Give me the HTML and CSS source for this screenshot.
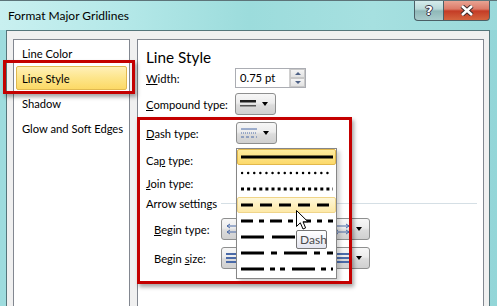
FILE: index.html
```html
<!DOCTYPE html>
<html lang="en">

<head>
  <meta charset="UTF-8">
  <title>Format Major Gridlines</title>
  <link rel="stylesheet" href="styles.css">
</head>

<body>
  <div class="window">
    <div class="titlebar">
      <span class="title">Format Major Gridlines</span>
      <div class="caption-buttons">
        <span class="cap-btn help">?</span>
        <span class="cap-btn close">
          <svg width="14" height="11" viewBox="0 0 14 11"><path d="M2 1 L12 10 M12 1 L2 10" stroke="#3a2a2a" stroke-width="4.5" /><path d="M2 1 L12 10 M12 1 L2 10" stroke="#fff" stroke-width="2.6" /></svg>
        </span>
      </div>
    </div>

    <div class="client">
      <ul class="nav">
        <li>Line Color</li>
        <li class="active">Line Style</li>
        <li>Shadow</li>
        <li>Glow and Soft Edges</li>
      </ul>

      <div class="panel">
        <h2 class="heading">Line Style</h2>

        <div class="row row-width">
          <span class="label"><u>W</u>idth:</span>
          <div class="spin">
            <span class="spin-value">0.75 pt</span>
            <span class="spin-arrows">
              <span class="spin-up"></span>
              <span class="spin-down"></span>
            </span>
          </div>
        </div>

        <div class="row row-compound">
          <span class="label"><u>C</u>ompound type:</span>
          <span class="drop-btn">
            <svg width="16" height="10" viewBox="0 0 16 10"><rect x="0" y="1" width="16" height="2.5" fill="#1e1e1e" /><rect x="0" y="6" width="16" height="1.5" fill="#555" /></svg>
            <span class="tri"></span>
          </span>
        </div>

        <div class="row row-dash">
          <span class="label"><u>D</u>ash type:</span>
          <span class="drop-btn">
            <svg width="16" height="12" viewBox="0 0 16 12"><line x1="0" y1="2" x2="16" y2="2" stroke="#4a6aa8" stroke-width="1" /><line x1="0" y1="6" x2="16" y2="6" stroke="#4a6aa8" stroke-width="1" stroke-dasharray="1 1" /><line x1="0" y1="10" x2="16" y2="10" stroke="#4a6aa8" stroke-width="1" stroke-dasharray="3 2" /></svg>
            <span class="tri"></span>
          </span>
        </div>

        <div class="row row-cap">
          <span class="label">Ca<u>p</u> type:</span>
        </div>

        <div class="row row-join">
          <span class="label"><u>J</u>oin type:</span>
        </div>

        <div class="row row-arrow">
          <span class="section">Arrow settings</span>
          <span class="rule"></span>
        </div>

        <div class="row row-begin">
          <span class="label sub"><u>B</u>egin type:</span>
          <span class="drop-btn">
            <svg width="16" height="12" viewBox="0 0 16 12"><path d="M1 3 H15 M1 3 L4 1 M1 3 L4 5" stroke="#4a6aa8" fill="none" stroke-width="1" /><path d="M1 9 H15 M1 9 L4 7 M1 9 L4 11 M15 9 L12 7 M15 9 L12 11" stroke="#4a6aa8" fill="none" stroke-width="1" /></svg>
            <span class="tri"></span>
          </span>
          <span class="drop-btn end">
            <svg width="16" height="12" viewBox="0 0 16 12"><path d="M1 3 H15 M15 3 L12 1 M15 3 L12 5" stroke="#4a6aa8" fill="none" stroke-width="1" /><path d="M1 9 H15 M1 9 L4 7 M1 9 L4 11 M15 9 L12 7 M15 9 L12 11" stroke="#4a6aa8" fill="none" stroke-width="1" /></svg>
            <span class="tri"></span>
          </span>
        </div>

        <div class="row row-size">
          <span class="label sub">Begin <u>s</u>ize:</span>
          <span class="drop-btn">
            <svg width="16" height="12" viewBox="0 0 16 12"><rect x="0" y="1" width="16" height="2" fill="#4a6aa8" /><rect x="0" y="5" width="16" height="2" fill="#4a6aa8" /><rect x="0" y="9" width="16" height="2" fill="#4a6aa8" /></svg>
            <span class="tri"></span>
          </span>
          <span class="drop-btn end">
            <svg width="16" height="12" viewBox="0 0 16 12"><rect x="0" y="1" width="16" height="2" fill="#4a6aa8" /><rect x="0" y="5" width="16" height="2" fill="#4a6aa8" /><rect x="0" y="9" width="16" height="2" fill="#4a6aa8" /></svg>
            <span class="tri"></span>
          </span>
        </div>
      </div>
    </div>

    <!-- dash type list, opened -->
    <ul class="dash-list">
      <li class="selected"><svg width="92" height="16"><line x1="0" y1="8" x2="92" y2="8" stroke="#000" stroke-width="3" /></svg></li>
      <li><svg width="92" height="16"><line x1="1" y1="8" x2="92" y2="8" stroke="#000" stroke-width="2.4" stroke-linecap="round" stroke-dasharray="0.1 6" /></svg></li>
      <li><svg width="92" height="16"><line x1="0" y1="8" x2="92" y2="8" stroke="#000" stroke-width="3" stroke-dasharray="3 3.1" /></svg></li>
      <li class="hover"><svg width="92" height="16"><line x1="0" y1="8" x2="92" y2="8" stroke="#000" stroke-width="3" stroke-dasharray="12 7" /></svg></li>
      <li><svg width="92" height="16"><line x1="0" y1="8" x2="92" y2="8" stroke="#000" stroke-width="3" stroke-dasharray="12 6 5 6" /></svg></li>
      <li><svg width="92" height="16"><line x1="0" y1="8" x2="92" y2="8" stroke="#000" stroke-width="3" stroke-dasharray="23 8" /></svg></li>
      <li><svg width="92" height="16"><line x1="0" y1="8" x2="92" y2="8" stroke="#000" stroke-width="3" stroke-dasharray="23 7 6 7" /></svg></li>
      <li><svg width="92" height="16"><line x1="0" y1="8" x2="92" y2="8" stroke="#000" stroke-width="3" stroke-dasharray="23 6 5 5 5 7" /></svg></li>
    </ul>

    <span class="tooltip">Dash</span>

    <svg class="cursor" width="13" height="21" viewBox="0 0 13 21">
      <path d="M0.5 0.5 L0.5 16.5 L4.3 12.8 L7 19 L9.6 17.9 L7 11.8 L12 11.8 Z" fill="#fff" stroke="#000" stroke-width="1" stroke-linejoin="miter" />
    </svg>

    <!-- annotation boxes -->
    <span class="mark mark-nav"></span>
    <span class="mark mark-dash"></span>
  </div>
</body>

</html>
```

FILE: styles.css
```css
* {
  box-sizing: border-box;
}

body {
  margin: 0;
  font-family: Lato, "Open Sans", sans-serif;
  font-size: 11.2px;
  color: #000;
}

.window {
  position: relative;
  width: 497px;
  height: 306px;
  overflow: hidden;
  border-top: 1px solid #5d7479;
  background: linear-gradient(90deg, #9edcde 0%, #b2e6e6 40%, #a4dede 70%, #93d6d8 100%);
}

.titlebar {
  display: flex;
  align-items: flex-start;
  height: 29px;
  background: linear-gradient(90deg, #c9f0f0 0%, #b4e8e8 25%, #9cdcdc 50%, #a6e0e0 75%, #9ad9da 100%);
}

.title {
  margin: 5px 0 0 8px;
  font-size: 12px;
  line-height: 20px;
  color: #000;
}

.caption-buttons {
  display: flex;
  margin: -1px 7px 0 auto;
}

.cap-btn {
  display: flex;
  align-items: center;
  justify-content: center;
  height: 21px;
  border: 1px solid #4b5f66;
  border-top: none;
}

.help {
  width: 29px;
  border-right: none;
  border-radius: 0 0 0 4px;
  background: linear-gradient(#d8eeee 0%, #b9d8d8 45%, #8fb8b8 55%, #a9cccc 100%);
  color: #fff;
  font-family: "DejaVu Sans", sans-serif;
  font-weight: bold;
  font-size: 13px;
  text-shadow: -1px 0 #334, 1px 0 #334, 0 -1px #334, 0 1px #334;
}

.close {
  width: 47px;
  border-radius: 0 0 4px 0;
  background: linear-gradient(#eaa898 0%, #dc7a68 45%, #c43c26 55%, #d4643e 100%);
}

.client {
  display: flex;
  align-items: flex-start;
  gap: 7px;
  width: 484px;
  height: 276px;
  margin-left: 6px;
  padding: 8px 5px 0 6px;
  border: 1px solid #55767b;
  border-bottom: none;
  background: #f0f0f0;
}

.nav {
  flex: none;
  width: 117px;
  min-width: 0;
  height: 300px;
  margin: 0;
  padding: 1px 1px;
  list-style: none;
  border: 1px solid #828790;
  background: #fff;
}

.nav li {
  height: 24px;
  margin-bottom: 1px;
  padding-left: 6px;
  line-height: 23px;
  white-space: nowrap;
  border: 1px solid transparent;
  border-radius: 2px;
}

.nav li.active {
  margin: 0 1px 1px;
  padding-left: 5px;
  border-color: #e0b850;
  background: linear-gradient(#fff0b8, #fde58a 50%, #fcd966);
}

.panel {
  flex: 1;
  min-width: 0;
  height: 300px;
  padding: 7px 0 0 8px;
  border: 1px solid #828790;
  background: #fff;
}

.heading {
  height: 20px;
  margin: 0;
  font-size: 15.3px;
  font-weight: normal;
  line-height: 20px;
}

.row {
  display: flex;
  align-items: center;
  height: 22px;
  white-space: nowrap;
}

.row-compound {
  margin-top: 4px;
}

.row-dash {
  margin-top: 7px;
}

.row-cap {
  margin-top: 5px;
}

.row-join {
  margin-top: 1px;
}

.row-arrow {
  height: 16px;
  margin-top: 1px;
}

.row-begin,
.row-size {
  margin-top: 7px;
}

.label {
  flex: 0 0 89px;
}

.label.sub {
  flex-basis: 67px;
  margin-left: 8px;
}

.spin {
  display: flex;
  width: 71px;
  height: 20px;
  border: 1px solid #abadb3;
}

.spin-value {
  flex: 1;
  padding-left: 4px;
  line-height: 18px;
}

.spin-arrows {
  display: flex;
  flex-direction: column;
  width: 16px;
  border-left: 1px solid #d0d0d0;
}

.spin-up,
.spin-down {
  position: relative;
  flex: 1;
  background: linear-gradient(#f4f4f4, #e2e2e2);
  border: 1px solid #c8c8c8;
}

.spin-up::after,
.spin-down::after {
  content: "";
  position: absolute;
  left: 4px;
  top: 2px;
  border-left: 3px solid transparent;
  border-right: 3px solid transparent;
}

.spin-up::after {
  border-bottom: 3px solid #4d6185;
}

.spin-down::after {
  border-top: 3px solid #4d6185;
}

.drop-btn {
  display: flex;
  align-items: center;
  flex: 0 0 41px;
  width: 41px;
  height: 22px;
  padding-left: 4px;
  border: 1px solid #8e8f8f;
  border-radius: 3px;
  background: linear-gradient(#f7f7f7 0%, #ececec 45%, #dcdcdc 55%, #d0d0d0 100%);
}

.drop-btn.end {
  margin-left: 67px;
}

.row-dash .drop-btn {
  margin-left: 1px;
}

.tri {
  margin-left: 6px;
  border-left: 3.5px solid transparent;
  border-right: 3.5px solid transparent;
  border-top: 4px solid #000;
}

.rule {
  flex: 1;
  height: 1px;
  margin: 1px 6px 0 4px;
  background: #d5dfe5;
}

.dash-list {
  position: absolute;
  left: 236px;
  top: 147px;
  width: 101px;
  margin: 0;
  padding: 0 0 1px;
  list-style: none;
  border: 1px solid #868686;
  background: #fff;
  box-shadow: 3px 3px 4px rgba(0, 0, 0, 0.18);
}

.dash-list li {
  display: flex;
  align-items: center;
  height: 16px;
  padding-left: 3px;
  border: 1px solid transparent;
  border-radius: 2px;
}

.dash-list li.selected {
  border-color: #e2b84c;
  background: linear-gradient(#fdeba0, #fcd96a);
}

.dash-list li.hover {
  border-color: #f0d58a;
  background: linear-gradient(#fef7d8, #fde9a8);
}

.tooltip {
  position: absolute;
  left: 296px;
  top: 229px;
  width: 31px;
  height: 19px;
  padding-left: 3px;
  border: 1px solid #767676;
  border-radius: 2px;
  background: linear-gradient(#ffffff, #e4e5f0);
  color: #4c4c4c;
  font-size: 12px;
  line-height: 17px;
}

.cursor {
  position: absolute;
  left: 296px;
  top: 209px;
}

.mark {
  position: absolute;
  border: 3px solid #c40000;
  box-shadow: 2px 3px 4px rgba(0, 0, 0, 0.35);
}

.mark-nav {
  left: 3px;
  top: 59px;
  width: 132px;
  height: 34px;
}

.mark-dash {
  left: 137px;
  top: 116px;
  width: 215px;
  height: 167px;
}
```
